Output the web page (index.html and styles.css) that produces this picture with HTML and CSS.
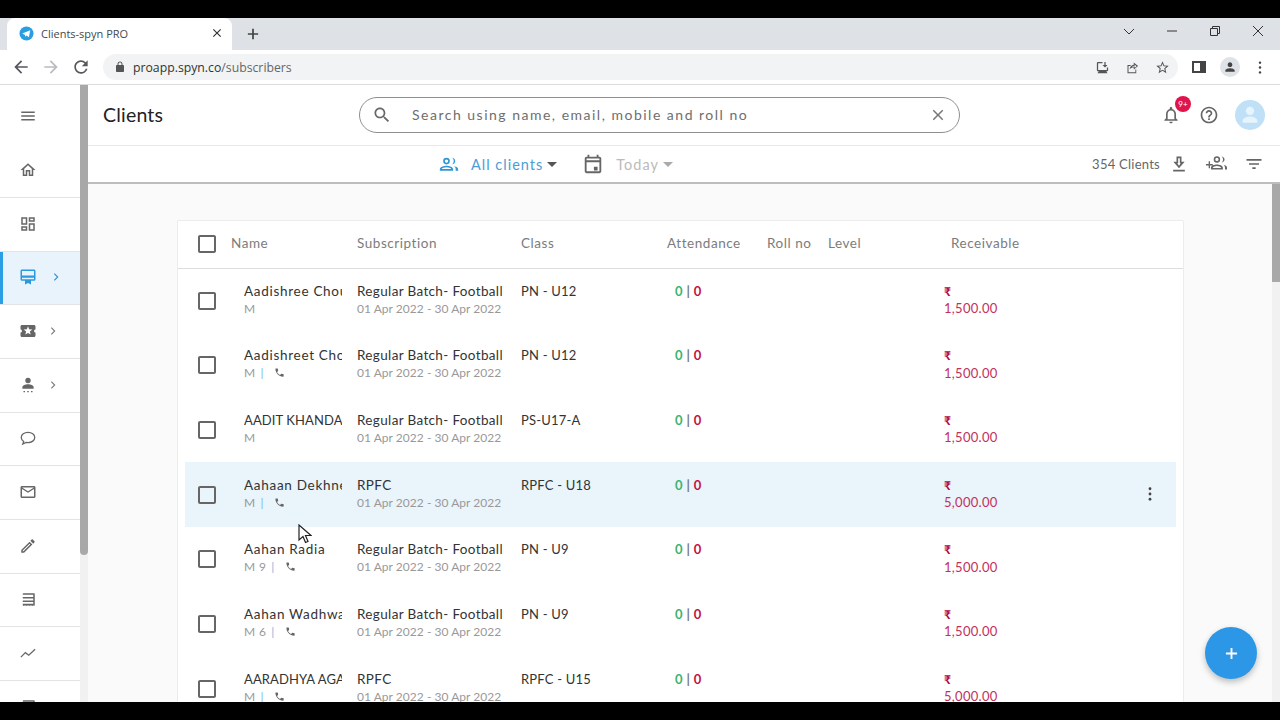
FILE: index.html
```html
<!DOCTYPE html>
<html lang="en">
<head>
	<meta charset="UTF-8">
	<title>Clients-spyn PRO</title>
	<link rel="stylesheet" href="styles.css">
</head>
<body>
	<svg class="defs">
		<symbol id="i-menu" viewBox="0 0 24 24"><path d="M3 18h18v-2H3v2zm0-5h18v-2H3v2zm0-7v2h18V6H3z"/></symbol>
		<symbol id="i-home" viewBox="0 0 24 24"><path d="M12 5.69l5 4.5V18h-2v-6H9v6H7v-7.81l5-4.5M12 3L2 12h3v8h6v-6h2v6h6v-8h3L12 3z"/></symbol>
		<symbol id="i-dash" viewBox="0 0 24 24"><path d="M19 5v2h-4V5h4M9 5v6H5V5h4m10 8v6h-4v-6h4M9 17v2H5v-2h4M21 3h-8v6h8V3zM11 3H3v10h8V3zm10 8h-8v10h8V11zm-10 4H3v6h8v-6z"/></symbol>
		<symbol id="i-card" viewBox="0 0 24 24"><path d="M20 2H4c-1.110 0-2 .89-2 2v11c0 1.110.89 2 2 2h4v5l4-2 4 2v-5h4c1.110 0 2-.89 2-2V4c0-1.110-.89-2-2-2zm0 13H4v-2h16v2zm0-5H4V4h16v6z"/></symbol>
		<symbol id="i-ticket" viewBox="0 0 24 24"><path d="M20 12c0-1.100.9-2 2-2V6c0-1.100-.9-2-2-2H4c-1.100 0-1.990.9-1.990 2v4c1.100 0 1.990.9 1.990 2s-.89 2-2 2v4c0 1.100.9 2 2 2h16c1.100 0 2-.9 2-2v-4c-1.100 0-2-.9-2-2zm-4.420 4.800L12 14.500l-3.580 2.300 1.080-4.120-3.290-2.690 4.240-.25L12 5.800l1.540 3.950 4.240.25-3.290 2.690 1.090 4.110z"/></symbol>
		<symbol id="i-staff" viewBox="0 0 24 24"><circle cx="12" cy="6" r="3.600"/><path d="M12 11c-3.600 0-7.500 1.600-7.500 4v2h15v-2c0-2.400-3.900-4-7.500-4z"/><path d="M6 20h2v1.600H6zM11 20h2v1.600h-2zM16 20h2v1.600h-2z"/></symbol>
		<symbol id="i-chat" viewBox="0 0 24 24"><path fill="none" stroke="currentColor" stroke-width="1.700" d="M12 4.500c-5 0-9 2.900-9 6.800 0 2.200 1.300 4.100 3.300 5.300L5 20l4.600-2.100c.8.100 1.600.200 2.400.200 5 0 9-2.900 9-6.800S17 4.500 12 4.500z"/></symbol>
		<symbol id="i-mail" viewBox="0 0 24 24"><path d="M20 4H4c-1.100 0-2 .9-2 2v12c0 1.100.9 2 2 2h16c1.100 0 2-.9 2-2V6c0-1.100-.9-2-2-2zm0 14H4V8l8 5 8-5v10zm-8-7L4 6h16l-8 5z"/></symbol>
		<symbol id="i-edit" viewBox="0 0 24 24"><path d="M14.060 9.020l.92.92L5.920 19H5v-.92l9.060-9.060M17.660 3c-.25 0-.51.1-.7.29l-1.830 1.830 3.750 3.750 1.830-1.830c.39-.39.39-1.020 0-1.410l-2.340-2.340c-.2-.2-.45-.29-.71-.29zm-3.600 3.190L3 17.250V21h3.750L17.810 9.940l-3.750-3.750z"/></symbol>
		<symbol id="i-list" viewBox="0 0 24 24"><path d="M4 3h16c.6 0 1 .4 1 1v15l-1 1-1-1-1 1-1-1-1 1-1-1-1 1-1-1-1 1-1-1-1 1-1-1-1 1-1-1-1 1-1-1V4c0-.6.4-1 1-1zm1 2v3h14V5H5zm0 5v2.500h14V10H5zm0 4.500V17h14v-2.500H5z"/></symbol>
		<symbol id="i-chart" viewBox="0 0 24 24"><path fill="none" stroke="currentColor" stroke-width="1.700" d="M2.500 17.500l6-6 4.500 3.500 8.500-8"/></symbol>
		<symbol id="i-search" viewBox="0 0 24 24"><path d="M15.500 14h-.79l-.28-.27C15.410 12.590 16 11.110 16 9.500 16 5.910 13.090 3 9.500 3S3 5.910 3 9.500 5.910 16 9.500 16c1.610 0 3.090-.59 4.230-1.570l.27.28v.79l5 4.990L20.490 19l-4.990-5zm-6 0C7.010 14 5 11.990 5 9.500S7.010 5 9.500 5 14 7.010 14 9.500 11.990 14 9.500 14z"/></symbol>
		<symbol id="i-close" viewBox="0 0 24 24"><path d="M19 6.410L17.590 5 12 10.590 6.410 5 5 6.410 10.590 12 5 17.590 6.410 19 12 13.410 17.590 19 19 17.590 13.410 12z"/></symbol>
		<symbol id="i-bell" viewBox="0 0 24 24"><path d="M12 22c1.100 0 2-.9 2-2h-4c0 1.100.9 2 2 2zm6-6v-5c0-3.070-1.630-5.640-4.500-6.320V4c0-.83-.67-1.500-1.500-1.500s-1.500.67-1.500 1.500v.68C7.640 5.360 6 7.920 6 11v5l-2 2v1h16v-1l-2-2zm-2 1H8v-6c0-2.480 1.510-4.500 4-4.500s4 2.020 4 4.500v6z"/></symbol>
		<symbol id="i-help" viewBox="0 0 24 24"><path d="M11 18h2v-2h-2v2zm1-16C6.480 2 2 6.480 2 12s4.480 10 10 10 10-4.480 10-10S17.520 2 12 2zm0 18c-4.410 0-8-3.590-8-8s3.590-8 8-8 8 3.590 8 8-3.590 8-8 8zm0-14c-2.210 0-4 1.790-4 4h2c0-1.100.9-2 2-2s2 .9 2 2c0 2-3 1.750-3 5h2c0-2.250 3-2.500 3-5 0-2.210-1.790-4-4-4z"/></symbol>
		<symbol id="i-people" viewBox="0 0 24 24"><path d="M9 12.500a4 4 0 1 0 0-8 4 4 0 0 0 0 8zm0-6a2 2 0 1 1 0 4 2 2 0 0 1 0-4zM9 14c-3.300 0-8 1.400-8 4.200V20h16v-1.800C17 15.400 12.300 14 9 14zm-5.800 4c.5-1.100 3.300-2 5.800-2s5.300.9 5.800 2H3.200zM15.500 4.600c1.300.6 2.200 2 2.200 3.900s-.9 3.300-2.200 3.900c2-.1 4-1.400 4-3.900s-2-3.800-4-3.900zM17.500 14.300c1.700.8 2.500 2.200 2.500 3.900V20h3v-1.800c0-2.300-3-3.500-5.500-3.900z"/></symbol>
		<symbol id="i-cal" viewBox="0 0 24 24"><path d="M19 4h-1V2h-2v2H8V2H6v2H5c-1.100 0-2 .9-2 2v14c0 1.100.9 2 2 2h14c1.100 0 2-.9 2-2V6c0-1.100-.9-2-2-2zm0 16H5V10h14v10zM5 8V6h14v2H5zm8 7h4v4h-4z"/></symbol>
		<symbol id="i-down" viewBox="0 0 24 24"><path d="M5 21h14v-2H5v2zM15 9.200V3H9v6.200H5.200L12 17l6.800-7.800H15zm-3 5L9.900 11H11V5h2v6h1.100L12 14.200z"/></symbol>
		<symbol id="i-addgroup" viewBox="0 0 24 24"><path d="M1 12h3V9h1.500v3h3v1.500h-3v3H4v-3H1zM13 10.500a3.500 3.500 0 1 0 0-7 3.500 3.500 0 0 0 0 7zm0-5.300a1.800 1.800 0 1 1 0 3.600 1.800 1.800 0 0 1 0-3.600zM13 12.500c-2.800 0-6.500 1.200-6.500 3.600V18h13v-1.900c0-2.400-3.700-3.600-6.500-3.600zm-4.700 3.800c.4-1 2.700-2 4.700-2s4.300 1 4.700 2H8.300zM18 3.700c1.100.6 1.700 2 1.700 3.300s-.6 2.700-1.700 3.300c1.800-.2 3.300-1.400 3.300-3.300s-1.500-3.100-3.300-3.300zM20 12.900c1.100.8 1.800 1.900 1.800 3.200V18H24v-1.900c0-1.700-2-2.800-4-3.200z"/></symbol>
		<symbol id="i-filter" viewBox="0 0 24 24"><path d="M10 18h4v-2h-4v2zM3 6v2h18V6H3zm3 7h12v-2H6v2z"/></symbol>
		<symbol id="i-check" viewBox="0 0 24 24"><path d="M19 5v14H5V5h14m0-2H5c-1.100 0-2 .9-2 2v14c0 1.100.9 2 2 2h14c1.100 0 2-.9 2-2V5c0-1.100-.9-2-2-2z"/></symbol>
		<symbol id="i-call" viewBox="0 0 24 24"><path d="M6.620 10.790c1.440 2.830 3.760 5.140 6.590 6.590l2.200-2.200c.27-.27.67-.36 1.020-.24 1.120.37 2.330.57 3.570.57.55 0 1 .45 1 1V20c0 .55-.45 1-1 1-9.390 0-17-7.610-17-17 0-.55.45-1 1-1h3.500c.55 0 1 .45 1 1 0 1.250.2 2.450.57 3.570.11.35.03.74-.25 1.020l-2.200 2.200z"/></symbol>
		<symbol id="i-chev" viewBox="0 0 12 12"><path fill="none" stroke="currentColor" stroke-width="1.300" d="M4 2l4 4-4 4"/></symbol>
		<symbol id="i-caret" viewBox="0 0 10 5"><path d="M0 0h10L5 5z"/></symbol>
	</svg>

	<div class="blackbar top"></div>

	<div class="tabstrip">
		<div class="tab">
			<svg class="favicon" viewBox="0 0 16 16"><circle cx="8" cy="8" r="7.500" fill="#2a9fe0"/><path d="M3.500 8l8.500-3.500-1.500 7.500-2.500-2-1.500 1.500V9.500z" fill="#fff"/></svg>
			<span class="tab-title">Clients-spyn PRO</span>
			<svg class="tab-x" viewBox="0 0 24 24"><use href="#i-close"/></svg>
		</div>
		<svg class="tab-new" viewBox="0 0 14 14"><path d="M6 1h2v5h5v2H8v5H6V8H1V6h5z"/></svg>
		<div class="winbtns">
			<svg viewBox="0 0 12 12"><path d="M1 4l5 5 5-5"/></svg>
			<svg viewBox="0 0 12 12"><path d="M1 6h10"/></svg>
			<svg viewBox="0 0 12 12"><path d="M1.500 3.500h7v7h-7zM3.500 3.500v-2h7v7h-2"/></svg>
			<svg viewBox="0 0 12 12"><path d="M1 1l10 10M11 1L1 11"/></svg>
		</div>
	</div>

	<div class="toolbar">
		<svg class="nav-icon" viewBox="0 0 24 24"><path d="M20 11H7.830l5.590-5.590L12 4l-8 8 8 8 1.410-1.410L7.830 13H20z"/></svg>
		<svg class="nav-icon off" viewBox="0 0 24 24"><path d="M12 4l-1.410 1.410L16.170 11H4v2h12.170l-5.580 5.590L12 20l8-8z"/></svg>
		<svg class="nav-icon" viewBox="0 0 24 24"><path d="M17.650 6.350A7.958 7.958 0 0 0 12 4c-4.420 0-7.990 3.580-7.990 8s3.570 8 7.990 8c3.730 0 6.840-2.550 7.730-6h-2.080A5.990 5.990 0 0 1 12 18c-3.310 0-6-2.690-6-6s2.690-6 6-6c1.660 0 3.140.69 4.220 1.780L13 11h7V4l-2.350 2.350z"/></svg>
		<div class="omnibox">
			<svg class="lock" viewBox="0 0 24 24"><path d="M18 8h-1V6c0-2.760-2.240-5-5-5S7 3.240 7 6v2H6c-1.100 0-2 .9-2 2v10c0 1.100.9 2 2 2h12c1.100 0 2-.9 2-2V10c0-1.100-.9-2-2-2zM9 8V6c0-1.660 1.340-3 3-3s3 1.340 3 3v2H9z"/></svg>
			<span class="url"><b>proapp.spyn.co</b>/subscribers</span>
			<div class="omni-icons">
				<svg viewBox="0 0 24 24"><path d="M5 3h7v2H5v11h14v-4h2v4c0 1.100-.9 2-2 2h-1l2 3H4l2-3H5c-1.100 0-2-.9-2-2V5c0-1.100.9-2 2-2zM15 3h2v5h3l-4 4-4-4h3z"/></svg>
				<svg viewBox="0 0 24 24"><path d="M4 8h5v1.600H5.600v9.800h11V15H18v6H4zM14 4l7 5.500-7 5.500v-3.200c-3 0-5 1-6.500 3 .5-3.800 2.500-6.600 6.500-7.200zm1.500 3v2.100c-2.300.2-3.600 1-4.700 2.300 1.300-.7 2.800-1 4.700-1v2l3-2.200z"/></svg>
				<svg viewBox="0 0 24 24"><path d="M22 9.240l-7.190-.62L12 2 9.190 8.630 2 9.240l5.460 4.730L5.820 21 12 17.270 18.180 21l-1.630-7.030L22 9.240zM12 15.400l-3.760 2.270 1-4.280-3.320-2.880 4.380-.38L12 6.100l1.710 4.040 4.380.38-3.320 2.880 1 4.280L12 15.400z"/></svg>
			</div>
		</div>
		<svg class="side-panel" viewBox="0 0 14 14"><path d="M0 1h14v12H0zm2 2v8h6V3z" fill-rule="evenodd"/></svg>
		<div class="profile"><svg viewBox="0 0 24 24"><path d="M12 12c2.210 0 4-1.790 4-4s-1.790-4-4-4-4 1.790-4 4 1.790 4 4 4zm0 2c-2.670 0-8 1.340-8 4v2h16v-2c0-2.660-5.330-4-8-4z"/></svg></div>
		<svg class="kebab" viewBox="0 0 4 16"><circle cx="2" cy="2" r="1.500"/><circle cx="2" cy="8" r="1.500"/><circle cx="2" cy="14" r="1.500"/></svg>
	</div>

	<div class="app">
		<nav class="sidebar">
			<a class="nav-item"><svg class="ic"><use href="#i-menu"/></svg></a>
			<a class="nav-item"><svg class="ic"><use href="#i-home"/></svg></a>
			<a class="nav-item"><svg class="ic"><use href="#i-dash"/></svg></a>
			<a class="nav-item active"><svg class="ic"><use href="#i-card"/></svg><svg class="chev"><use href="#i-chev"/></svg></a>
			<a class="nav-item"><svg class="ic"><use href="#i-ticket"/></svg><svg class="chev"><use href="#i-chev"/></svg></a>
			<a class="nav-item"><svg class="ic"><use href="#i-staff"/></svg><svg class="chev"><use href="#i-chev"/></svg></a>
			<a class="nav-item"><svg class="ic"><use href="#i-chat"/></svg></a>
			<a class="nav-item"><svg class="ic"><use href="#i-mail"/></svg></a>
			<a class="nav-item"><svg class="ic"><use href="#i-edit"/></svg></a>
			<a class="nav-item"><svg class="ic"><use href="#i-list"/></svg></a>
			<a class="nav-item"><svg class="ic"><use href="#i-chart"/></svg></a>
			<a class="nav-item"><svg class="ic"><use href="#i-list"/></svg></a>
		</nav>
		<div class="scroll side-scroll"><div class="thumb"></div></div>

		<div class="main">
			<header class="page-head">
				<h1>Clients</h1>
				<div class="search">
					<svg class="search-ic"><use href="#i-search"/></svg>
					<span class="search-text">Search using name, email, mobile and roll no</span>
					<svg class="search-x"><use href="#i-close"/></svg>
				</div>
				<div class="head-tools">
					<div class="bell">
						<svg class="ic"><use href="#i-bell"/></svg>
						<span class="badge">9+</span>
					</div>
					<svg class="ic"><use href="#i-help"/></svg>
					<div class="avatar"><svg viewBox="0 0 24 24"><path d="M12 12c2.600 0 4.500-2 4.500-4.500S14.600 3 12 3 7.500 5 7.500 7.500 9.400 12 12 12zm0 1.500c-3.200 0-8 1.700-8 4.500v2.500h16V18c0-2.800-4.800-4.500-8-4.500z"/></svg></div>
				</div>
			</header>

			<div class="filters">
				<svg class="ic blue"><use href="#i-people"/></svg>
				<span class="f-label blue">All clients</span>
				<svg class="caret dark"><use href="#i-caret"/></svg>
				<svg class="ic cal"><use href="#i-cal"/></svg>
				<span class="f-label faded">Today</span>
				<svg class="caret light"><use href="#i-caret"/></svg>
				<div class="f-right">
					<span class="count">354 Clients</span>
					<svg class="ic"><use href="#i-down"/></svg>
					<svg class="ic wide"><use href="#i-addgroup"/></svg>
					<svg class="ic"><use href="#i-filter"/></svg>
				</div>
			</div>

			<div class="body-wrap">
				<section class="content">
					<div class="card">
						<div class="t-row t-head">
							<svg class="box"><use href="#i-check"/></svg>
							<span>Name</span>
							<span>Subscription</span>
							<span>Class</span>
							<span>Attendance</span>
							<span>Roll no</span>
							<span>Level</span>
							<span class="recv-head">Receivable</span>
						</div>

						<div class="t-row">
							<svg class="box"><use href="#i-check"/></svg>
							<div class="who"><div class="name">Aadishree Choudhary</div><div class="sub">M</div></div>
							<div><div class="pri">Regular Batch- Football</div><div class="date">01 Apr 2022 - 30 Apr 2022</div></div>
							<div class="pri cls">PN - U12</div>
							<div class="att"><i>0</i> | <em>0</em></div>
							<div></div><div></div>
							<div class="amt"><div class="rs">₹</div>1,500.00</div>
						</div>
						<div class="t-row">
							<svg class="box"><use href="#i-check"/></svg>
							<div class="who"><div class="name">Aadishreet Choudhary</div><div class="sub">M<span class="sep">|</span><svg class="call"><use href="#i-call"/></svg></div></div>
							<div><div class="pri">Regular Batch- Football</div><div class="date">01 Apr 2022 - 30 Apr 2022</div></div>
							<div class="pri cls">PN - U12</div>
							<div class="att"><i>0</i> | <em>0</em></div>
							<div></div><div></div>
							<div class="amt"><div class="rs">₹</div>1,500.00</div>
						</div>
						<div class="t-row">
							<svg class="box"><use href="#i-check"/></svg>
							<div class="who"><div class="name caps">AADIT KHANDALWAL</div><div class="sub">M</div></div>
							<div><div class="pri">Regular Batch- Football</div><div class="date">01 Apr 2022 - 30 Apr 2022</div></div>
							<div class="pri cls">PS-U17-A</div>
							<div class="att"><i>0</i> | <em>0</em></div>
							<div></div><div></div>
							<div class="amt"><div class="rs">₹</div>1,500.00</div>
						</div>
						<div class="t-row hover">
							<svg class="box"><use href="#i-check"/></svg>
							<div class="who"><div class="name">Aahaan Dekhne</div><div class="sub">M<span class="sep">|</span><svg class="call"><use href="#i-call"/></svg></div></div>
							<div><div class="pri">RPFC</div><div class="date">01 Apr 2022 - 30 Apr 2022</div></div>
							<div class="pri cls">RPFC - U18</div>
							<div class="att"><i>0</i> | <em>0</em></div>
							<div></div><div></div>
							<div class="amt"><div class="rs">₹</div>5,000.00</div>
							<svg class="more" viewBox="0 0 4 16"><circle cx="2" cy="2" r="1.600"/><circle cx="2" cy="8" r="1.600"/><circle cx="2" cy="14" r="1.600"/></svg>
						</div>
						<div class="t-row">
							<svg class="box"><use href="#i-check"/></svg>
							<div class="who"><div class="name">Aahan Radia</div><div class="sub">M 9<span class="sep">|</span><svg class="call"><use href="#i-call"/></svg></div></div>
							<div><div class="pri">Regular Batch- Football</div><div class="date">01 Apr 2022 - 30 Apr 2022</div></div>
							<div class="pri cls">PN - U9</div>
							<div class="att"><i>0</i> | <em>0</em></div>
							<div></div><div></div>
							<div class="amt"><div class="rs">₹</div>1,500.00</div>
						</div>
						<div class="t-row">
							<svg class="box"><use href="#i-check"/></svg>
							<div class="who"><div class="name">Aahan Wadhwani</div><div class="sub">M 6<span class="sep">|</span><svg class="call"><use href="#i-call"/></svg></div></div>
							<div><div class="pri">Regular Batch- Football</div><div class="date">01 Apr 2022 - 30 Apr 2022</div></div>
							<div class="pri cls">PN - U9</div>
							<div class="att"><i>0</i> | <em>0</em></div>
							<div></div><div></div>
							<div class="amt"><div class="rs">₹</div>1,500.00</div>
						</div>
						<div class="t-row">
							<svg class="box"><use href="#i-check"/></svg>
							<div class="who"><div class="name caps">AARADHYA AGARWAL</div><div class="sub">M<span class="sep">|</span><svg class="call"><use href="#i-call"/></svg></div></div>
							<div><div class="pri">RPFC</div><div class="date">01 Apr 2022 - 30 Apr 2022</div></div>
							<div class="pri cls">RPFC - U15</div>
							<div class="att"><i>0</i> | <em>0</em></div>
							<div></div><div></div>
							<div class="amt"><div class="rs">₹</div>5,000.00</div>
						</div>
					</div>
				</section>
				<div class="scroll main-scroll"><div class="thumb"></div></div>
			</div>
		</div>

		<button class="fab"><svg viewBox="0 0 14 14"><path d="M6 1h2v5h5v2H8v5H6V8H1V6h5z"/></svg></button>
		<svg class="cursor" viewBox="0 0 14 20"><path d="M1 1v15l4-3.500 2.500 6 2.500-1-2.500-6H13z" fill="#fff" stroke="#222" stroke-width="1.200"/></svg>
	</div>

	<div class="blackbar bottom"></div>
</body>
</html>
```

FILE: styles.css
```css
*{margin: 0;padding: 0;box-sizing: border-box;}
body{
	width: 1280px;
	height: 720px;
	overflow: hidden;
	display: flex;
	flex-direction: column;
	background: #000;
	font-family: Lato, "Open Sans", sans-serif;
	color: #333;
}
.defs{display: none;}
.blackbar{background: #000;flex: none;}
.blackbar.top{height: 18px;}
.blackbar.bottom{height: 18px;}

/* browser chrome */
.tabstrip{
	height: 32px;
	flex: none;
	background: #dee1e6;
	display: flex;
	align-items: flex-end;
	padding-left: 7px;
}
.tab{
	width: 225px;
	height: 32px;
	background: #fff;
	border-radius: 8px 8px 0 0;
	display: flex;
	align-items: center;
	padding: 0 8px 2px 12px;
}
.favicon{width: 15px;height: 15px;flex: none;}
.tab-title{
	font: 11px "Open Sans", sans-serif;
	color: #45494d;
	margin-left: 7px;
	flex: 1;
}
.tab-x{width: 14px;height: 14px;fill: #333;}
.tab-new{width: 12px;height: 12px;fill: #444;margin: 0 0 10px 15px;}
.winbtns{
	margin-left: auto;
	height: 32px;
	display: flex;
	align-items: flex-start;
	padding: 7px 16px 0 0;
	gap: 31px;
}
.winbtns svg{
	width: 12px;
	height: 12px;
	fill: none;
	stroke: #333;
	stroke-width: 1;
}

.toolbar{
	height: 35px;
	flex: none;
	background: #fff;
	border-bottom: 1px solid #dcdcdc;
	display: flex;
	align-items: center;
	padding-left: 11px;
}
.nav-icon{width: 20px;height: 20px;fill: #55585c;margin-right: 10px;}
.nav-icon.off{fill: #b9bbbe;}
.omnibox{
	width: 1075px;
	height: 26px;
	margin-left: 2px;
	background: #f1f3f4;
	border-radius: 13px;
	display: flex;
	align-items: center;
	padding: 0 8px 0 11px;
}
.lock{width: 12px;height: 12px;fill: #555;}
.url{
	font: 12.250px "Open Sans", sans-serif;
	color: #666;
	margin-left: 7px;
}
.url b{font-weight: 400;color: #333;}
.omni-icons{margin-left: auto;display: flex;gap: 15px;}
.omni-icons svg{width: 15px;height: 15px;fill: #555;}
.side-panel{width: 14px;height: 14px;fill: #444;margin-left: 14px;}
.profile{
	width: 20px;
	height: 20px;
	border-radius: 50%;
	background: #dfe2e6;
	margin-left: 14px;
	padding: 3px;
}
.profile svg{width: 14px;height: 14px;fill: #444;display: block;}
.kebab{width: 4px;height: 13px;fill: #444;margin-left: 18px;}

/* app */
.app{
	flex: 1;
	min-height: 0;
	display: flex;
	background: #fff;
	position: relative;
	overflow: hidden;
}
.ic{width: 18px;height: 18px;fill: #666;color: #666;flex: none;}
.sidebar{
	width: 80px;
	flex: none;
	padding-top: 5.500px;
	overflow: hidden;
}
.nav-item{
	height: 53.700px;
	border-bottom: 1px solid #e4e4e4;
	display: flex;
	align-items: center;
	padding: 0 0 1px 19px;
}
.nav-item:first-child{border-bottom-color: transparent;}
.nav-item .ic{width: 18px;height: 18px;}
.chev{width: 10px;height: 10px;color: #777;margin-left: 11px;}
.nav-item.active{
	background: #e8f3fb;
	box-shadow: inset 3px 0 0 #2b9fe6;
}
.nav-item.active .ic{fill: #2a9ae0;}
.nav-item.active .chev{color: #2a8fd0;margin-left: 14px;}

.scroll{width: 8px;flex: none;background: #f1f1f1;}
.thumb{background: #a8a8a8;width: 100%;}
.side-scroll .thumb{height: 470px;border-radius: 0 0 4px 4px;}
.main-scroll .thumb{height: 98px;}

.main{
	flex: 1;
	min-width: 0;
	display: flex;
	flex-direction: column;
}
.page-head{
	height: 61px;
	flex: none;
	border-bottom: 1px solid #e8e8e8;
	display: flex;
	align-items: center;
	padding-left: 15px;
}
.page-head h1{
	font-size: 19.500px;
	font-weight: 400;
	color: #222;
	letter-spacing: .2px;
	width: 256px;
	padding-bottom: 2px;
}
.search{
	width: 601px;
	height: 36px;
	border: 1px solid #8f8f8f;
	border-radius: 18px;
	display: flex;
	align-items: center;
	padding: 0 12px;
}
.search-ic{width: 20px;height: 20px;fill: #666;}
.search-text{
	font-size: 14px;
	color: #6e6e6e;
	letter-spacing: 1.500px;
	margin-left: 20px;
	padding-bottom: 2px;
	flex: 1;
}
.search-x{width: 18px;height: 18px;fill: #777;}
.head-tools{
	margin-left: auto;
	display: flex;
	align-items: center;
	padding-right: 15px;
	gap: 18px;
}
.head-tools .ic{width: 20px;height: 20px;}
.bell{position: relative;height: 20px;}
.badge{
	position: absolute;
	left: 4px;
	top: -9px;
	margin-left: 10px;
	width: 16px;
	height: 16px;
	border-radius: 50%;
	background: #e0144c;
	color: #fff;
	font-size: 8px;
	line-height: 16px;
	text-align: center;
}
.avatar{
	width: 30px;
	height: 30px;
	border-radius: 50%;
	background: #bfe0f7;
	margin-left: -2px;
	padding: 4px;
}
.avatar svg{width: 22px;height: 22px;fill: #e6f4fd;display: block;}

.filters{
	height: 38px;
	flex: none;
	background: #fff;
	border-bottom: 2px solid #bdbdbd;
	display: flex;
	align-items: center;
	padding: 0 16px 0 351px;
}
.filters .ic{width: 20px;height: 20px;}
.filters .ic.blue{fill: #2f97d6;}
.filters .ic.cal{width: 22px;height: 22px;margin-left: 25px;}
.f-label{font-size: 14.500px;letter-spacing: 1px;}
.f-label.blue{color: #4a9ed3;margin-left: 12px;}
.f-label.faded{color: #bbb;margin-left: 12px;}
.caret{width: 10px;height: 5px;margin-left: 4px;}
.caret.dark{fill: #555;}
.caret.light{fill: #aaa;}
.f-right{
	margin-left: auto;
	display: flex;
	align-items: center;
}
.count{font-size: 13px;color: #666;margin-right: 9px;letter-spacing: .25px;}
.filters .ic.wide{width: 24px;height: 22px;margin: 0 16px 0 15px;}

.body-wrap{
	flex: 1;
	min-height: 0;
	display: flex;
}
.content{
	flex: 1;
	min-width: 0;
	background: #fafafa;
	padding: 36px 88px 0 89px;
	overflow: hidden;
}
.card{
	background: #fff;
	border: 1px solid #ececec;
	border-radius: 2px;
	padding: 0 7px;
	height: 700px;
}

/* table */
.t-row{
	display: grid;
	grid-template-columns: 46px 126px 164px 146px 100px 61px 116px 1fr 52px;
	height: 64.700px;
	padding-top: 14.500px;
	align-items: start;
	font-size: 13.500px;
	line-height: 17px;
	letter-spacing: .35px;
}
.t-head{
	height: 48px;
	margin: 0 -7px -1px;
	padding: 0 7px 2px;
	align-items: center;
	border-bottom: 1px solid #ddd;
	color: #7c7c7c;
	letter-spacing: .55px;
}
.box{
	width: 24px;
	height: 24px;
	fill: #666;
	margin-left: 10px;
	align-self: center;
}
.t-row:not(.t-head) .box{transform: translateY(-7px);}
.who{padding: 0 15px 0 13px;min-width: 0;}
.name{
	white-space: nowrap;
	overflow: hidden;
	color: #333;
	letter-spacing: .7px;
}
.name.caps{font-size: 13px;letter-spacing: .1px;}
.sub{
	display: flex;
	align-items: center;
	height: 17px;
	font-size: 12px;
	color: #999;
	letter-spacing: .35px;
}
.sep{color: #7ab8dc;margin: 0 10px 0 5px;}
.call{width: 11px;height: 11px;fill: #666;}
.pri{color: #333;}
.cls{font-size: 13px;letter-spacing: .2px;}
.date{font-size: 12px;color: #999;letter-spacing: .03px;}
.att{padding-left: 8px;font-weight: 700;color: #777;font-size: 13px;}
.att i{font-style: normal;color: #3cb371;}
.att em{font-style: normal;color: #c4103f;}
.amt{color: #c4305c;line-height: 17.500px;font-size: 13px;letter-spacing: .3px;}
.rs{color: #b0063f;font-weight: 700;font-size: 12px;}
.recv-head{padding-left: 7px;}
.hover{background: #e9f4fb;}
.more{
	width: 4px;
	height: 14px;
	fill: #444;
	justify-self: center;
	align-self: center;
	transform: translateY(-8px);
}

/* over the page */
.fab{
	position: absolute;
	right: 23px;
	top: 542px;
	width: 52px;
	height: 52px;
	border: 0;
	border-radius: 50%;
	background: #2c97e6;
	box-shadow: 0 3px 6px rgba(0,0,0,.25);
	display: flex;
	align-items: center;
	justify-content: center;
}
.fab svg{width: 13px;height: 13px;fill: #fff;}
.cursor{
	position: absolute;
	left: 298px;
	top: 439px;
	width: 14px;
	height: 20px;
}
```
